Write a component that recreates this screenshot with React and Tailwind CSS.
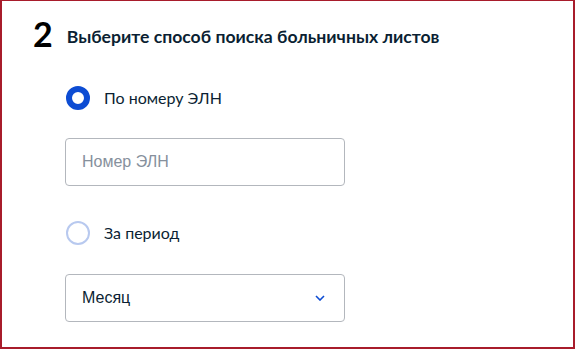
import React, { useState } from 'react';

function Radio({ checked, label, onClick }) {
  return (
    <button type="button" onClick={onClick} className="flex items-center gap-[14px] text-left ml-px">
      <span
        className={
          checked
            ? 'w-6 h-6 rounded-full border-[6px] border-[#0d4cd3] bg-white'
            : 'w-6 h-6 rounded-full border-2 border-[#b8c9ef] bg-white'
        }
      />
      <span className="text-[16px] text-[#0b1f33] leading-6">{label}</span>
    </button>
  );
}

export default function App() {
  const [mode, setMode] = useState('number');
  const [eln, setEln] = useState('');

  return (
    <div className="w-[575px] h-[349px] bg-white border-l-2 border-t border-r-2 border-b-2 border-[#a81c2b] font-['Lato',sans-serif] overflow-hidden">
      <div className="flex items-end gap-[14px] pl-[31px] pt-[14px]">
        <span className="text-[34px] font-bold leading-[38px] text-black">2</span>
        <h2 className="text-[17.6px] font-bold text-[#0b1f33] leading-[28px] pb-[2px]">
          Выберите способ поиска больничных листов
        </h2>
      </div>

      <div className="pl-[63px] pt-[33px] flex flex-col">
        <Radio checked={mode === 'number'} label="По номеру ЭЛН" onClick={() => setMode('number')} />

        <input
          value={eln}
          onChange={(e) => setEln(e.target.value)}
          placeholder="Номер ЭЛН"
          className="mt-[28px] w-[280px] h-[48px] rounded-[4px] border border-[#b3b7bd] px-4 text-[16px] font-['Liberation_Sans',sans-serif] text-[#0b1f33] placeholder:text-[#86909c] outline-none"
        />

        <div className="mt-[35px]">
          <Radio checked={mode === 'period'} label="За период" onClick={() => setMode('period')} />
        </div>

        <button
          type="button"
          className="mt-[29px] w-[280px] h-[48px] rounded-[4px] border border-[#b3b7bd] px-4 flex items-center justify-between text-[16px] font-['Liberation_Sans',sans-serif] text-[#0b1f33]"
        >
          <span>Месяц</span>
          <svg width="10" height="6" viewBox="0 0 10 6" className="mr-[3px]">
            <path d="M1 1l4 4 4-4" fill="none" stroke="#0d4cd3" strokeWidth="1.6" />
          </svg>
        </button>
      </div>
    </div>
  );
}
